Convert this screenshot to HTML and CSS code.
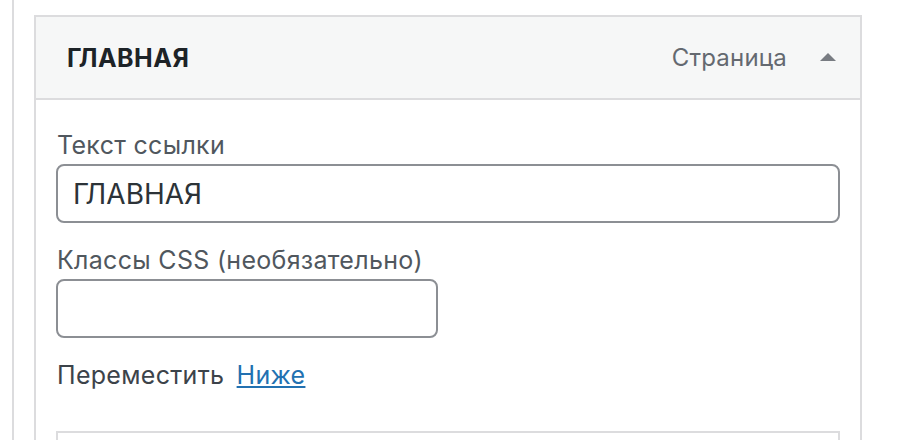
FILE: index.html
```html
<!DOCTYPE html>
<html lang="ru">
<head>
<meta charset="utf-8">
<title>Пункт меню</title>
<link rel="stylesheet" href="styles.css">
</head>
<body>
<div class="page">
  <div class="rail"></div>
  <div class="card">
    <div class="card-head">
      <span class="title">ГЛАВНАЯ</span>
      <span class="meta">
        <span class="type">Страница</span>
        <svg class="arrow" width="16" height="8" viewBox="0 0 16 8"><polygon points="8,0 16,8 0,8" fill="#787c82"/></svg>
      </span>
    </div>
    <div class="card-body">
      <label class="field-label">Текст ссылки</label>
      <div class="input wide">ГЛАВНАЯ</div>
      <label class="field-label second">Классы CSS (необязательно)</label>
      <div class="input narrow"></div>
      <div class="move">Переместить <a href="#" class="link">Ниже</a></div>
      <div class="next-box"></div>
    </div>
  </div>
</div>
</body>
</html>
```
FILE: styles.css
```css
html, body {
  margin: 0;
  padding: 0;
  background: #fff;
  height: 100%;
  overflow: hidden;
}
body {
  font-family: Inter, "Noto Sans", sans-serif;
  color: #3c434a;
}
.page {
  display: flex;
  height: 440px;
}
.rail {
  width: 12px;
  border-right: 2px solid #dcdcde;
  flex: none;
}
.card {
  margin-left: 20px;
  margin-top: 15px;
  width: 824px;
  height: 423px;
  border: 2px solid #dcdcde;
  border-bottom: none;
  flex: none;
  overflow: hidden;
}
.card-head {
  height: 81px;
  background: #f6f7f7;
  border-bottom: 2px solid #dcdcde;
  display: flex;
  align-items: center;
  justify-content: space-between;
  padding: 0 24px 0 31px;
}
.title {
  font-size: 25px;
  font-weight: 700;
  color: #1d2327;
  letter-spacing: 0.5px;
}
.meta {
  display: flex;
  align-items: center;
  gap: 33px;
}
.type {
  font-size: 24px;
  letter-spacing: 0.2px;
  color: #646970;
}
.arrow {
  display: block;
  margin-top: -2px;
}
.card-body {
  padding: 30px 20px 0 20px;
  display: flex;
  flex-direction: column;
  align-items: flex-start;
}
.field-label {
  font-size: 25px;
  line-height: 30px;
  letter-spacing: 0.3px;
  color: #50575e;
  padding-left: 1px;
}
.field-label.second {
  margin-top: 22px;
}
.input {
  box-sizing: border-box;
  border: 2px solid #8c8f94;
  border-radius: 8px;
  height: 59px;
  margin-top: 4px;
  font-size: 28px;
  color: #2c3338;
  display: flex;
  align-items: center;
  padding-left: 15px;
}
.input.wide {
  width: 784px;
}
.input.narrow {
  width: 382px;
  margin-top: 4px;
}
.move {
  margin-top: 22px;
  font-size: 25px;
  line-height: 30px;
  letter-spacing: 0.3px;
  color: #3c434a;
  padding-left: 1px;
}
.link {
  color: #2271b1;
  text-decoration: underline;
  margin-left: 5px;
}
.next-box {
  margin-top: 41px;
  width: 780px;
  height: 20px;
  border: 2px solid #dcdcde;
}
```
